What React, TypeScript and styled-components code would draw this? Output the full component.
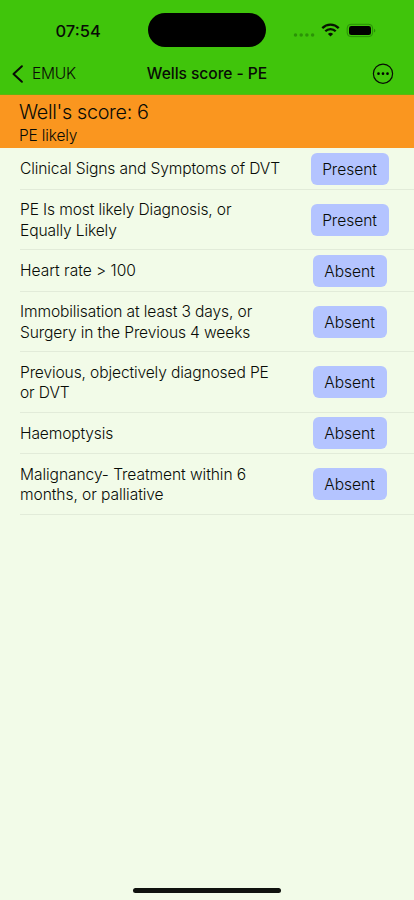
import React from "react";
import styled, { createGlobalStyle } from "styled-components";

const GlobalStyle = createGlobalStyle`
  * { box-sizing: border-box; }
  body { margin: 0; background: #f2fbe8; }
`;

const Screen = styled.main`
  width: 414px;
  height: 900px;
  display: flex;
  flex-direction: column;
  overflow: hidden;
  background: #f2fbe8;
  color: #080b06;
  font-family: Inter, "Liberation Sans", sans-serif;
  font-size: 16px;
  white-space: nowrap;
`;

const TopBar = styled.header`
  height: 95px;
  flex: none;
  background: #40c50b;
  border-bottom: 1px solid #5fb50f;
`;

const StatusBar = styled.div`
  height: 54px;
  padding-top: 13px;
  display: grid;
  grid-template-columns: 148px 118px 148px;
`;

const Clock = styled.time`
  padding-left: 55.5px;
  font-size: 16.5px;
  font-weight: 550;
  line-height: 36px;
`;

const Island = styled.div`
  height: 34px;
  border-radius: 17px;
  background: #000;
`;

const StatusIcons = styled.svg`
  width: 84px;
  height: 18px;
  margin: 8px 0 0 27px;
`;

const NavBar = styled.nav`
  height: 40px;
  display: grid;
  grid-template-columns: 120px 174px 120px;
  align-items: center;
`;

const BackButton = styled.button`
  display: flex;
  align-items: center;
  gap: 8px;
  padding: 0 0 0 11px;
  border: 0;
  background: none;
  color: inherit;
  font: 300 15.6px/24px Inter, sans-serif;
  letter-spacing: -0.3px;
`;

const Title = styled.h1`
  margin: 0;
  text-align: center;
  font-size: 15.6px;
  font-weight: 550;
  line-height: 24px;
  letter-spacing: -0.05px;
`;

const MoreButton = styled.button`
  display: flex;
  justify-self: end;
  margin-right: 20px;
  padding: 0;
  border: 0;
  background: none;
  color: inherit;
`;

const ScoreBanner = styled.section`
  height: 53px;
  flex: none;
  padding: 4px 19px 0;
  background: #fa961f;
`;

const Score = styled.div`
  font-size: 19.8px;
  font-weight: 300;
  line-height: 27px;
  letter-spacing: -0.33px;
`;

const Verdict = styled.div`
  font-size: 15.5px;
  font-weight: 300;
  line-height: 20px;
  letter-spacing: -0.15px;
`;

const Criteria = styled.ul`
  margin: 0;
  padding: 0 0 0 20px;
  list-style: none;
`;

const Row = styled.li<{ $height: number }>`
  height: ${({ $height }) => $height}px;
  display: grid;
  grid-template-columns: 1fr 130px;
  align-items: center;
  border-bottom: 1px solid #e2ebd9;
`;

const Label = styled.div<{ $spacing: number }>`
  padding-top: 2px;
  font-size: 15.6px;
  font-weight: 300;
  line-height: 20.5px;
  letter-spacing: ${({ $spacing }) => $spacing}px;
`;

const Choice = styled.button<{ $present: boolean }>`
  justify-self: center;
  width: ${({ $present }) => ($present ? 78 : 74)}px;
  height: 32px;
  margin-left: 1px;
  padding: 1px 0 0;
  border: 0;
  border-radius: 6px;
  background: #b4c4ff;
  color: inherit;
  font: 300 15.6px/31px Inter, sans-serif;
  letter-spacing: -0.05px;
`;

const HomeIndicator = styled.div`
  width: 148px;
  height: 4.5px;
  flex: none;
  margin: auto auto 7.5px 133px;
  border-radius: 3px;
  background: #10120e;
`;

type Criterion = { lines: string[]; present?: boolean; height: number; spacing: number };

const criteria: Criterion[] = [
  { lines: ["Clinical Signs and Symptoms of DVT"], present: true, height: 42, spacing: -0.13 },
  { lines: ["PE Is most likely Diagnosis, or", "Equally Likely"], present: true, height: 60, spacing: -0.13 },
  { lines: ["Heart rate > 100"], height: 42, spacing: -0.02 },
  { lines: ["Immobilisation at least 3 days, or", "Surgery in the Previous 4 weeks"], height: 60, spacing: -0.13 },
  { lines: ["Previous, objectively diagnosed PE", "or DVT"], height: 61, spacing: -0.135 },
  { lines: ["Haemoptysis"], height: 41, spacing: -0.15 },
  { lines: ["Malignancy- Treatment within 6", "months, or palliative"], height: 61, spacing: -0.08 },
];

export default function App() {
  return (
    <>
      <GlobalStyle />
      <Screen>
        <TopBar>
          <StatusBar>
            <Clock>07:54</Clock>
            <Island />
            <StatusIcons viewBox="0 0 84 18" aria-label="Wi-Fi on, battery full">
              <g fill="#2b9307">
                <circle cx="2.5" cy="14" r="1.75" />
                <circle cx="8.2" cy="14" r="1.75" />
                <circle cx="13.9" cy="14" r="1.75" />
                <circle cx="19.6" cy="14" r="1.75" />
              </g>
              <g fill="none" stroke="#071402" strokeWidth="2.3">
                <path d="M29.3 7.1a11.5 11.5 0 0 1 16.4 0" />
                <path d="M32.3 10.3a7.3 7.3 0 0 1 10.4 0" />
              </g>
              <path d="M34.9 13a3.8 3.8 0 0 1 5.2 0L37.5 15.6z" fill="#071402" />
              <rect x="54.2" y="3.3" width="25.4" height="12.3" rx="3.7" fill="none" stroke="#289006" />
              <rect x="56" y="5" width="22" height="9" rx="2.3" fill="#000" />
              <path d="M81 7.7c1.8.6 1.8 3.2 0 3.8z" fill="#289006" />
            </StatusIcons>
          </StatusBar>
          <NavBar>
            <BackButton>
              <svg width="13" height="20" viewBox="0 0 13 20" fill="none">
                <path d="M10.9 2.3 2.5 10l8.4 7.7" stroke="currentColor" strokeWidth="2" strokeLinecap="round" strokeLinejoin="round" />
              </svg>
              EMUK
            </BackButton>
            <Title>Wells score - PE</Title>
            <MoreButton aria-label="More">
              <svg width="22" height="22" viewBox="0 0 22 22">
                <circle cx="11" cy="10.7" r="9.6" fill="none" stroke="currentColor" strokeWidth="1.2" />
                <circle cx="6.5" cy="10.7" r="1.35" />
                <circle cx="11" cy="10.7" r="1.35" />
                <circle cx="15.5" cy="10.7" r="1.35" />
              </svg>
            </MoreButton>
          </NavBar>
        </TopBar>
        <ScoreBanner>
          <Score>Well's score: 6</Score>
          <Verdict>PE likely</Verdict>
        </ScoreBanner>
        <Criteria>
          {criteria.map(({ lines, present = false, height, spacing }) => (
            <Row key={lines[0]} $height={height}>
              <Label $spacing={spacing}>
                {lines.map((line) => <div key={line}>{line}</div>)}
              </Label>
              <Choice $present={present}>{present ? "Present" : "Absent"}</Choice>
            </Row>
          ))}
        </Criteria>
        <HomeIndicator />
      </Screen>
    </>
  );
}
